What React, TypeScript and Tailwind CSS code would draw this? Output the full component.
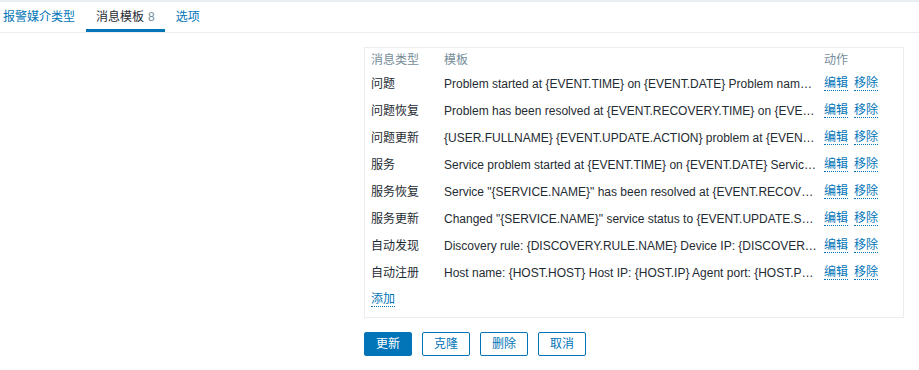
import React from 'react';

interface MessageTemplate {
  type: string;
  template: string;
}

const templates: MessageTemplate[] = [
  { type: '问题', template: 'Problem started at {EVENT.TIME} on {EVENT.DATE} Problem name: {EVENT.NAME} Host: {HOST.NAME} Severity: {EVENT.SEVERITY}' },
  { type: '问题恢复', template: 'Problem has been resolved at {EVENT.RECOVERY.TIME} on {EVENT.RECOVERY.DATE} Problem name: {EVENT.NAME}' },
  { type: '问题更新', template: '{USER.FULLNAME} {EVENT.UPDATE.ACTION} problem at {EVENT.UPDATE.DATE} {EVENT.UPDATE.TIME}.' },
  { type: '服务', template: 'Service problem started at {EVENT.TIME} on {EVENT.DATE} Service problem name: {EVENT.NAME}' },
  { type: '服务恢复', template: 'Service "{SERVICE.NAME}" has been resolved at {EVENT.RECOVERY.TIME} on {EVENT.RECOVERY.DATE}' },
  { type: '服务更新', template: 'Changed "{SERVICE.NAME}" service status to {EVENT.UPDATE.SEVERITY} at {EVENT.UPDATE.DATE}' },
  { type: '自动发现', template: 'Discovery rule: {DISCOVERY.RULE.NAME} Device IP: {DISCOVERY.DEVICE.IPADDRESS} Device DNS: {DISCOVERY.DEVICE.DNS}' },
  { type: '自动注册', template: 'Host name: {HOST.HOST} Host IP: {HOST.IP} Agent port: {HOST.PORT}' },
];

const font = 'font-["Liberation_Sans","Noto_Sans_CJK_SC",sans-serif]';

const LinkText: React.FC<{ children: React.ReactNode }> = ({ children }) => (
  <a href="#" className="text-[#0275b8] leading-[14px] border-b border-dotted border-[#0275b8]">
    {children}
  </a>
);

const App: React.FC = () => {
  return (
    <div className={`${font} text-[12px] text-[#1f2c33] bg-white w-[919px] h-[370px]`}>
      <div className="h-[2px] bg-[#ebeef0]" />
      <div className="flex h-[31px] border-b border-[#ebeef0]">
        <div className="flex items-center pl-[3px] pr-[11px] text-[#0275b8]">报警媒介类型</div>
        <div className="flex items-center px-[10px] border-b-[3px] border-[#0275b8] pt-[3px]">
          消息模板 <span className="ml-[4px] text-[#768d99]">8</span>
        </div>
        <div className="flex items-center px-[11px] text-[#0275b8]">选项</div>
      </div>

      <div className="ml-[364px] mt-[14px] w-[540px]">
        <div className="border border-[#ebeef0] px-[6px] pb-[4px]">
          <div className="flex h-[22px] pt-[5px] leading-[14px] text-[#768d99]">
            <div className="w-[73px]">消息类型</div>
            <div className="w-[380px]">模板</div>
            <div className="flex-1">动作</div>
          </div>
          {templates.map((t) => (
            <div key={t.type} className="flex h-[27px] items-center">
              <div className="w-[73px]">{t.type}</div>
              <div className="w-[380px] pr-[7px] truncate">{t.template}</div>
              <div className="flex-1 flex gap-[6px]">
                <LinkText>编辑</LinkText>
                <LinkText>移除</LinkText>
              </div>
            </div>
          ))}
          <div className="flex h-[27px] items-center">
            <LinkText>添加</LinkText>
          </div>
        </div>

        <div className="flex gap-[10px] mt-[14px]">
          <button className="w-[48px] h-[24px] rounded-[2px] bg-[#0275b8] text-white border border-[#0275b8]">更新</button>
          <button className="w-[48px] h-[24px] rounded-[2px] bg-white text-[#0275b8] border border-[#0275b8]">克隆</button>
          <button className="w-[48px] h-[24px] rounded-[2px] bg-white text-[#0275b8] border border-[#0275b8]">删除</button>
          <button className="w-[48px] h-[24px] rounded-[2px] bg-white text-[#0275b8] border border-[#0275b8]">取消</button>
        </div>
      </div>
    </div>
  );
};

export default App;
